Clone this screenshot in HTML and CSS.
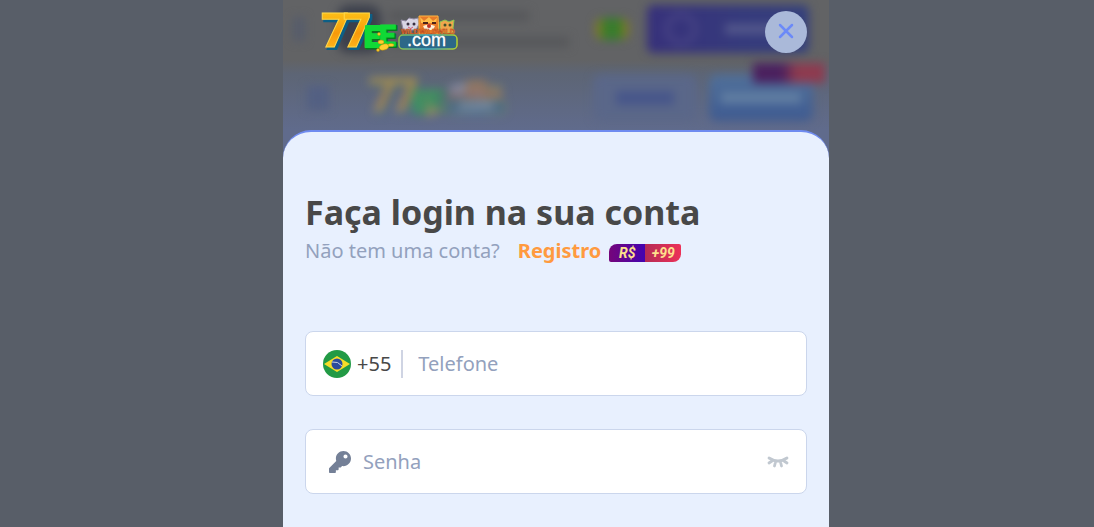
FILE: index.html
```html
<!DOCTYPE html>
<html lang="pt-BR">

<head>
    <meta charset="utf-8">
    <meta name="viewport" content="width=device-width, initial-scale=1">
    <title>77EE.com</title>
    <link rel="stylesheet" href="styles.css">
</head>

<body>
    <svg width="0" height="0" class="defs" aria-hidden="true">
        <defs>
            <linearGradient id="gold" x1="0" y1="0" x2="0" y2="1">
                <stop offset="0" stop-color="#ffd21e" />
                <stop offset="0.55" stop-color="#f79a0a" />
                <stop offset="1" stop-color="#ffc82a" />
            </linearGradient>
            <linearGradient id="rim" x1="0" y1="0" x2="1" y2="0">
                <stop offset="0" stop-color="#8bc34a" />
                <stop offset="0.5" stop-color="#38a8c8" />
                <stop offset="1" stop-color="#b5d42c" />
            </linearGradient>
            <symbol id="logo" viewBox="0 0 140 44">
                <g font-family="Roboto, sans-serif" font-weight="900" font-size="49">
                    <text x="2" y="38" fill="#0c5f86" stroke="#0c5f86" stroke-width="2">7</text>
                    <text x="24" y="38" fill="#0c5f86" stroke="#0c5f86" stroke-width="2">7</text>
                    <text x="0" y="36" fill="url(#gold)" stroke="#ffd84a" stroke-width="1">7</text>
                    <text x="22" y="36" fill="url(#gold)" stroke="#ffd84a" stroke-width="1">7</text>
                </g>
                <g font-family="Roboto, sans-serif" font-weight="900" font-size="30" stroke-linejoin="round">
                    <text x="44" y="37" fill="#067a1c" stroke="#067a1c" stroke-width="3">E</text>
                    <text x="59" y="36" fill="#067a1c" stroke="#067a1c" stroke-width="2">E</text>
                    <text x="43" y="36" fill="#10d936" stroke="#10d936" stroke-width="2">E</text>
                    <text x="58" y="35" fill="#10d936" stroke="#10d936">E</text>
                </g>
                <g fill="#ffcf2e" stroke="#b88a08" stroke-width="0.5">
                    <ellipse cx="60" cy="31" rx="3" ry="2" />
                    <ellipse cx="63" cy="36" rx="5" ry="3" transform="rotate(-18 63 36)" />
                    <ellipse cx="70" cy="34" rx="3" ry="1.5" />
                    <circle cx="58" cy="23" r="1.5" />
                    <circle cx="57" cy="39" r="1.5" />
                </g>
                <!-- mascots -->
                <path d="M82 18l-2-9 5 1 3-3 5 1 4-1 1 6-3 6h-11z" fill="#d8d5e4" stroke="#8e879f" />
                <circle cx="87" cy="13" r="1.5" fill="#3a3042" />
                <circle cx="93" cy="13" r="1.5" fill="#3a3042" />
                <path d="M87 16q3 3 5 0" fill="none" stroke="#d35c77" />
                <path d="M98 5h19l1 18H98z" fill="#e77b29" stroke="#ffb743" />
                <path d="M99 6l4 4 5-4 4 4 4-3-1 5H100z" fill="#ffbf4b" />
                <path d="M102 12h5M111 12h4" stroke="#4d221a" stroke-width="2" />
                <path d="M102 15q6-3 12 0l-2 4h-8z" fill="#fff0d7" />
                <circle cx="108" cy="15" r="2" fill="#bd3328" />
                <path d="M119 11l5-2 4 2 5-2-1 8 1 5h-14z" fill="#f1a64c" stroke="#8fc851" />
                <circle cx="124" cy="14" r="1.5" fill="#42512b" />
                <circle cx="129" cy="14" r="1.5" fill="#42512b" />
                <g font-family="Liberation Sans, Arial, sans-serif" font-weight="bold" font-size="7" fill="#ffa33a" stroke="#a92c16" stroke-width="0.4">
                    <text x="80" y="23">WILD</text>
                    <text x="98" y="23">WILD</text>
                    <text x="116" y="23">WILD</text>
                </g>
                <rect x="78" y="24" width="58" height="14" rx="4" fill="#2c6888" stroke="url(#rim)" stroke-width="1.5" />
                <text x="86" y="35" font-family="Liberation Sans, Arial, sans-serif" font-size="18" fill="#fff" stroke="#fff" stroke-width="0.3">.com</text>
            </symbol>
        </defs>
    </svg>

    <div class="app">
        <div class="page" aria-hidden="true">
            <div class="promo">
                <span class="promo-close"></span>
                <span class="promo-icon"></span>
                <div class="promo-lines">
                    <span></span>
                    <span></span>
                </div>
                <span class="promo-flag"></span>
                <div class="promo-download">
                    <i></i>
                    <b></b>
                </div>
            </div>
            <div class="topbar">
                <span class="menu"></span>
                <svg class="logo"><use href="#logo" /></svg>
                <span class="nav-login"><i></i></span>
                <span class="nav-register"><i></i><b></b></span>
            </div>
        </div>

        <main class="modal">
            <header class="modal-top">
                <svg class="logo" role="img" aria-label="77EE.com"><use href="#logo" /></svg>
                <button type="button" class="close" aria-label="Fechar">
                    <svg width="16" height="16" viewBox="0 0 16 16">
                        <path d="M2 2l12 12M14 2L2 14" fill="none" stroke="#6c8af8" stroke-width="2.5" stroke-linecap="round" />
                    </svg>
                </button>
            </header>

            <section class="panel">
                <h1>Faça login na sua conta</h1>
                <p class="signup">
                    <span>Não tem uma conta?</span>
                    <a href="#">Registro</a>
                    <span class="bonus"><b>R$</b><b>+99</b></span>
                </p>

                <form>
                    <div class="field">
                        <label class="prefix" for="phone" aria-label="Telefone">
                            <svg class="flag" viewBox="0 0 28 28">
                                <circle cx="14" cy="14" r="14" fill="#229a45" />
                                <path d="M1 14l13-8 13 8-13 8z" fill="#f6dd27" />
                                <circle cx="14" cy="14" r="5.5" fill="#2b4b9b" />
                                <path d="M9 12q6-1 10 4" fill="none" stroke="#c5d0e6" />
                            </svg>
                            <span>+55</span>
                        </label>
                        <input type="tel" id="phone" placeholder="Telefone">
                    </div>
                    <div class="field">
                        <label class="key" for="password" aria-label="Senha">
                            <svg width="22" height="22" viewBox="0 0 512 512">
                                <path fill="#748097" d="M512 176c0 97-79 176-176 176-11 0-22-1-33-3l-24 27c-5 5-11 8-18 8h-37v40c0 13-11 24-24 24h-40v40c0 13-11 24-24 24H24c-13 0-24-11-24-24v-78c0-6 3-12 7-17l162-162c-6-17-9-36-9-55C160 79 239 0 336 0s176 79 176 176zM336 128a48 48 0 1 0 96 0 48 48 0 1 0-96 0z" />
                            </svg>
                        </label>
                        <input type="password" id="password" placeholder="Senha">
                        <button type="button" class="eye" aria-label="Mostrar senha">
                            <svg width="22" height="14" viewBox="0 0 22 14">
                                <path d="M2 3q9 6 18 0M5 6L2 8M8.500 7l-1 4M13.500 7l1 4M17 6l3 2" fill="none" stroke="#c1c8d0" stroke-width="2.800" stroke-linecap="round" />
                            </svg>
                        </button>
                    </div>
                </form>
            </section>
        </main>
    </div>
</body>

</html>
```
FILE: styles.css
```css
* {
    box-sizing: border-box;
}

body {
    margin: 0;
    padding-left: 18px;
    background: #585e68;
    color: #484848;
    font-family: "Noto Sans", "Open Sans", sans-serif;
    font-size: 20px;
}

.defs {
    position: absolute;
}

.app {
    position: relative;
    max-width: 546px;
    min-height: 100vh;
    margin: 0 auto;
    overflow: hidden;
}

.logo {
    display: block;
    width: 140px;
    height: 44px;
}

/* page behind the modal */
.page {
    position: absolute;
    top: 0;
    left: 0;
    right: 0;
    height: 170px;
    background: linear-gradient(#626365 0, #626365 60px, #5d6575 74px, #606b8c 130px);
}

.promo,
.topbar {
    display: flex;
    align-items: center;
    height: 64px;
    filter: blur(5px);
}

.promo {
    padding: 0 20px 6px 10px;
}

.promo-close {
    width: 12px;
    height: 24px;
    margin-right: 32px;
    background: #565c6b;
}

.promo-icon {
    width: 44px;
    height: 48px;
    border-radius: 12px;
    background: #3c404c;
}

.promo-lines {
    display: grid;
    gap: 16px;
    flex: 1;
    padding-left: 8px;
}

.promo-lines span {
    width: 140px;
    height: 10px;
    background: #56575a;
}

.promo-lines span + span {
    width: 180px;
}

.promo-flag {
    width: 34px;
    height: 22px;
    margin-right: 18px;
    border: solid #7c7a28;
    border-width: 0 7px;
    border-radius: 8px;
    background: #397c2c;
}

.promo-download {
    display: flex;
    align-items: center;
    gap: 28px;
    width: 162px;
    height: 48px;
    padding-left: 18px;
    border-radius: 6px;
    background: linear-gradient(90deg, #37317b, #34407c);
}

.promo-download i {
    width: 32px;
    height: 32px;
    border: 4px solid #4c4788;
    border-radius: 50%;
}

.promo-download b {
    width: 60px;
    height: 10px;
    background: #54588c;
}

.topbar {
    padding: 4px 16px 0 24px;
}

.topbar .logo {
    margin: 0 auto 0 40px;
    opacity: 0.4;
}

.menu {
    width: 22px;
    height: 24px;
    background: #536083;
}

.nav-login,
.nav-register {
    display: flex;
    align-items: center;
    justify-content: center;
    position: relative;
    width: 104px;
    height: 46px;
    border-radius: 8px;
}

.nav-login {
    margin-right: 12px;
    background: #5a6789;
}

.nav-login i {
    width: 58px;
    height: 14px;
    background: #47568a;
}

.nav-register {
    background: linear-gradient(#50709a, #3e5a91);
}

.nav-register i {
    width: 80px;
    height: 10px;
    background: #6380a3;
}

.nav-register b {
    position: absolute;
    top: -12px;
    right: -12px;
    width: 72px;
    height: 20px;
    background: linear-gradient(90deg, #4b205e 40%, #8e3b4f 60%);
}

/* login modal */
.modal {
    display: flex;
    flex-direction: column;
    position: relative;
    min-height: 100vh;
}

.modal-top {
    display: flex;
    align-items: flex-start;
    justify-content: space-between;
    height: 130px;
    padding: 11px 22px 0 38px;
}

.close {
    display: flex;
    align-items: center;
    justify-content: center;
    width: 42px;
    height: 42px;
    padding: 0 0 2px;
    border: none;
    border-radius: 50%;
    background: #aab9d9;
    cursor: pointer;
}

.panel {
    flex: 1;
    padding: 58px 22px 32px;
    border-top: 2px solid #6f8bf0;
    border-radius: 28px 28px 0 0;
    background: #e8f0fe;
}

h1 {
    margin: 0 0 3px;
    font-size: 34px;
    line-height: 44px;
    white-space: nowrap;
}

.signup {
    display: flex;
    align-items: center;
    margin: 0 0 66px;
    color: #93a1bd;
    line-height: 28px;
}

.signup a {
    margin: 0 8px 0 18px;
    color: #ff9a3f;
    font-weight: bold;
    text-decoration: none;
}

.bonus {
    display: flex;
    width: 72px;
    height: 18px;
    margin-top: 4px;
    overflow: hidden;
    border-radius: 8px 2px;
    color: #ffe08c;
    font-family: Roboto, sans-serif;
    font-size: 14px;
    font-style: italic;
    line-height: 18px;
    text-align: center;
}

.bonus b {
    flex: 1;
    background: linear-gradient(90deg, #75057a, #4403b0);
}

.bonus b + b {
    background: linear-gradient(90deg, #b52b55, #ec3158);
}

form {
    display: grid;
    gap: 33px;
}

.field {
    display: flex;
    align-items: center;
    height: 65px;
    padding: 0 17px;
    border: 1px solid #cbd6ec;
    border-radius: 8px;
    background: #fff;
}

.field input {
    flex: 1;
    min-width: 0;
    padding: 0;
    border: none;
    outline: none;
    background: none;
    color: #484848;
    font: inherit;
}

.field input::placeholder {
    color: #93a1bd;
    opacity: 1;
}

.prefix {
    display: flex;
    align-items: center;
    gap: 6px;
    height: 28px;
    margin-right: 15px;
    padding-right: 10px;
    border-right: 2px solid #cfd4e3;
}

.flag {
    width: 28px;
    height: 28px;
}

.key {
    display: flex;
    margin: 0 12px 0 6px;
}

.eye {
    display: flex;
    padding: 0;
    border: none;
    background: none;
    cursor: pointer;
}
```
